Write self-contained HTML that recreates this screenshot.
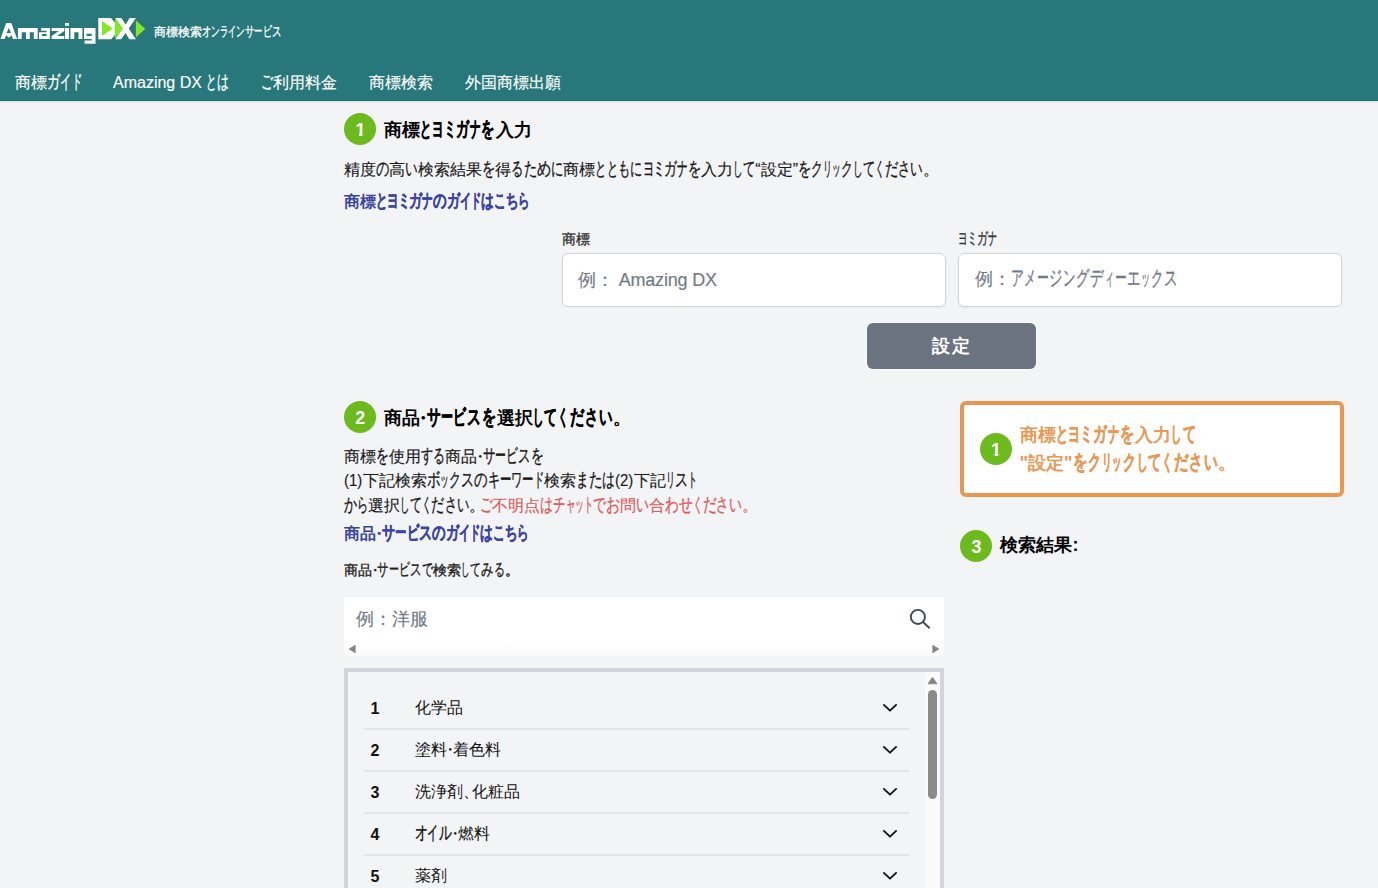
<!DOCTYPE html>
<html lang="ja">
<head>
<meta charset="utf-8">
<title>Amazing DX 商標検索オンラインサービス</title>
<style>
*{box-sizing:border-box;margin:0;padding:0}
html,body{width:1378px;height:888px;overflow:hidden}
body{position:relative;background:#f3f4f6;font-family:"Liberation Sans",sans-serif;color:#1a1a1a}
.abs{position:absolute}
.t{position:absolute;white-space:nowrap}
.t{--f:1}
.t i{font-style:normal;display:inline-block;line-height:0;-webkit-text-stroke:.35px;font-size:1.18em;transform-origin:0 50%;transform:scaleX(calc(var(--w)*var(--f)/1.18));margin-right:calc((var(--w)*var(--f)/1.18 - 1)*1em)}
.t b{font-weight:inherit;display:inline-block;line-height:0}
.t b.pl{margin-right:calc((var(--w)*var(--f) - 1)*1em)}
.t b.pm{margin:0 calc((var(--w)*var(--f) - 1)*.5em)}
.sm{display:inline-block;line-height:0;transform:scaleX(.93);transform-origin:0 50%;margin-right:-1px}
.w40{--w:0.40}.w45{--w:0.45}.w50{--w:0.50}.w55{--w:0.55}.w57{--w:0.57}.w58{--w:0.58}.w60{--w:0.60}.w62{--w:0.62}.w64{--w:0.64}.w65{--w:0.65}.w68{--w:0.68}.w70{--w:0.70}.w72{--w:0.72}.w75{--w:0.75}.w76{--w:0.76}.w78{--w:0.78}.w80{--w:0.80}.w82{--w:0.82}.w85{--w:0.85}.w88{--w:0.88}.w90{--w:0.90}
header{position:absolute;left:0;top:0;width:1378px;height:103px;background:linear-gradient(to bottom,#28777a 0,#28777a 100px,#2e6a6c 100px,#2e6a6c 101px,#cdeaec 101px,#cdeaec 102px,#e6ecef 102px,#e6ecef 103px)}
.logo{position:absolute;left:0;top:0}
.num{position:absolute;width:32px;height:32px;border-radius:50%;background:#6dba1e;color:#fff;font-weight:700;font-size:18px;line-height:34px;text-align:center}
.num span{display:inline-block;position:relative;left:.5px}
.num .one{clip-path:polygon(0 0,100% 0,100% 61%,70% 61%,70% 100%,36% 100%,36% 61%,0 61%)}
.inp{position:absolute;height:54px;width:384px;background:#fff;border:1px solid #d1d5db;border-radius:6px;box-shadow:0 1px 2px rgba(0,0,0,.05)}
.btn{position:absolute;left:867px;top:323px;width:169px;height:46px;border-radius:6px;background:#6b7280;box-shadow:0 0 0 1px #f9fafc}
.search{position:absolute;left:344px;top:597px;width:600px;height:59px;background:#fff}
.search .sb{position:absolute;left:0;top:43px;width:600px;height:16px;background:linear-gradient(#fff,#fafafa)}
.list{position:absolute;left:344px;top:668px;width:600px;height:240px;border:4px solid #d1d5db;background:#f3f4f6}
.track{position:absolute;left:925px;top:672px;width:15px;height:216px;background:#fafafa}
.thumb{position:absolute;left:928px;top:690px;width:9px;height:109px;border-radius:5px;background:#8b8b8b}
.sep{position:absolute;left:364px;width:545px;height:2px;background:#e3e5ea}
.chev{position:absolute;left:881px;width:18px;height:12px}
.obox{position:absolute;left:960px;top:401px;width:384px;height:96px;border:4px solid #eb9650;border-radius:6px;background:#fff}
</style>
</head>
<body>
<header>
<svg class="logo" width="150" height="50" viewBox="0 0 150 50" aria-label="Amazing DX">
<g fill="#fff" fill-rule="evenodd">
<path d="M0.4,38.9 L6.2,22.9 H11.3 L17.2,38.9 H12.9 L11.6,35.2 L8.9,37.8 L6.1,35.2 L4.7,38.9 Z M8.8,28 L11,32.9 H6.6 Z"/>
<path d="M17.9,28 H37.7 V38.9 H33.8 V32.2 H29.8 V38.9 H26 V32.2 H21.7 V38.9 H17.9 Z"/>
<path d="M41.1,28 H49.9 V38.9 H39 V32.2 H46.6 V30.8 H41.1 Z M42,33.9 H46.6 V36 H42 Z"/>
<path d="M51.6,28 H64.3 V31 L57.2,36 H64.3 V38.9 H51.6 V36 L58.8,31 H51.6 Z"/>
<path d="M65,22.9 H69 V25.7 H65 Z M65,28 H69 V38.9 H65 Z"/>
<path d="M70.4,28 H82.4 V38.9 H78.5 V32.2 H74.3 V38.9 H70.4 Z"/>
<path d="M84,28 H95.5 V43.8 H84.6 V40.4 H91.7 V38.9 H84 Z M86.6,33.8 H91.7 V36 H86.6 Z"/>
<path d="M98.3,18.1 H110.9 L114.9,22.5 V35 L111.2,39.2 H98.3 Z"/>
<path d="M115.2,18.1 H121.4 L125.6,24.6 L129.6,18.1 H135.9 L128.8,28.6 L135.9,39.2 H129.3 L125.6,33 L121.2,39.2 H115.2 L122.4,28.6 Z"/>
</g>
<g fill="#85e825">
<path d="M102,21.1 L112.6,28.5 L102,36 Z"/>
<path d="M115,18.4 L123,28.6 L115,38.7 Z"/>
<path d="M135.9,20.5 L145.3,28.8 L135.9,37.5 Z"/>
</g>
</svg>
</header>

<div class="num" style="left:344px;top:113px"><span class="one">1</span></div>
<div class="inp" style="left:562px;top:253px"></div>
<div class="inp" style="left:958px;top:253px"></div>
<div class="btn"></div>

<div class="num" style="left:343.7px;top:401.4px"><span>2</span></div>

<div class="search"><div class="sb"></div>
<svg class="abs" style="left:564px;top:10px" width="24" height="24" viewBox="0 0 24 24" fill="none" stroke="#414957" stroke-width="1.9" stroke-linecap="round"><circle cx="9.9" cy="9.9" r="7.05"/><path d="M15,15 L21.2,20.7"/></svg>
<svg class="abs" style="left:4px;top:46.5px" width="9" height="10" viewBox="0 0 9 10"><path d="M1.2,5 L7.2,1.3 V8.7 Z" fill="#858585" stroke="#858585" stroke-width=".8" stroke-linejoin="round"/></svg>
<svg class="abs" style="left:587px;top:46.5px" width="9" height="10" viewBox="0 0 9 10"><path d="M7.8,5 L1.8,1.3 V8.7 Z" fill="#858585" stroke="#858585" stroke-width=".8" stroke-linejoin="round"/></svg>
</div>

<div class="list"></div>
<div class="track"></div>
<svg class="abs" style="left:927px;top:676px" width="11" height="9" viewBox="0 0 11 9"><path d="M5.5,1.2 L10,7.8 H1 Z" fill="#858585" stroke="#858585" stroke-width=".8" stroke-linejoin="round"/></svg>
<div class="thumb"></div>
<div class="sep" style="top:728px"></div>
<svg class="chev" style="top:702px" viewBox="0 0 18 12" fill="none" stroke="#111" stroke-width="1.85" stroke-linecap="round" stroke-linejoin="round"><path d="M2.9,2.9 L9,8.7 L15.1,2.9"/></svg>
<div class="sep" style="top:770px"></div>
<svg class="chev" style="top:744px" viewBox="0 0 18 12" fill="none" stroke="#111" stroke-width="1.85" stroke-linecap="round" stroke-linejoin="round"><path d="M2.9,2.9 L9,8.7 L15.1,2.9"/></svg>
<div class="sep" style="top:812px"></div>
<svg class="chev" style="top:786px" viewBox="0 0 18 12" fill="none" stroke="#111" stroke-width="1.85" stroke-linecap="round" stroke-linejoin="round"><path d="M2.9,2.9 L9,8.7 L15.1,2.9"/></svg>
<div class="sep" style="top:854px"></div>
<svg class="chev" style="top:828px" viewBox="0 0 18 12" fill="none" stroke="#111" stroke-width="1.85" stroke-linecap="round" stroke-linejoin="round"><path d="M2.9,2.9 L9,8.7 L15.1,2.9"/></svg>
<div class="sep" style="top:896px"></div>
<svg class="chev" style="top:870px" viewBox="0 0 18 12" fill="none" stroke="#111" stroke-width="1.85" stroke-linecap="round" stroke-linejoin="round"><path d="M2.9,2.9 L9,8.7 L15.1,2.9"/></svg>

<div class="obox"></div>
<div class="num" style="left:979.6px;top:433.4px"><span class="one">1</span></div>
<div class="num" style="left:959.9px;top:529.8px"><span>3</span></div>

<div class="t" id="tag" style="left:154px;top:23px;font-size:12px;line-height:18px;color:#fff;-webkit-text-stroke:.3px;--f:0.976;">商標検索<i class="w80">オ</i><i class="w75">ン</i><i class="w72">ラ</i><i class="w70">イ</i><i class="w75">ン</i><i class="w82">サ</i><i class="w72">ー</i><i class="w78">ビ</i><i class="w82">ス</i></div>
<div class="t" id="n1" style="left:15px;top:71px;font-size:16px;line-height:24px;color:#fff;-webkit-text-stroke:.15px;--f:1.001;">商標<i class="w82">ガ</i><i class="w70">イ</i><i class="w64">ド</i></div>
<div class="t" id="n2" style="left:113px;top:71px;font-size:16px;line-height:24px;color:#fff;-webkit-text-stroke:.15px;--f:0.920;">Amazing DX <i class="w72">と</i><i class="w80">は</i></div>
<div class="t" id="n3" style="left:261px;top:71px;font-size:16px;line-height:24px;color:#fff;-webkit-text-stroke:.15px;--f:0.951;"><i class="w78">ご</i>利用料金</div>
<div class="t" id="n4" style="left:369px;top:71px;font-size:16px;line-height:24px;color:#fff;-webkit-text-stroke:.15px;">商標検索</div>
<div class="t" id="n5" style="left:465px;top:71px;font-size:16px;line-height:24px;color:#fff;-webkit-text-stroke:.15px;">外国商標出願</div>
<div class="t" id="h1" style="left:384px;top:117px;font-size:18px;line-height:27px;color:#000;font-weight:700;--f:0.888;">商標<i class="w72">と</i><i class="w72">ヨ</i><i class="w65">ミ</i><i class="w82">ガ</i><i class="w68">ナ</i><i class="w85">を</i>入力</div>
<div class="t" id="d1" style="left:344px;top:158px;font-size:16px;line-height:24px;color:#1a1a1a;-webkit-text-stroke:.15px;--f:0.974;">精度<i class="w85">の</i>高<i class="w80">い</i>検索結果<i class="w85">を</i>得<i class="w78">る</i><i class="w85">た</i><i class="w90">め</i><i class="w78">に</i>商標<i class="w72">と</i><i class="w72">と</i><i class="w78">も</i><i class="w78">に</i><i class="w72">ヨ</i><i class="w65">ミ</i><i class="w82">ガ</i><i class="w68">ナ</i><i class="w85">を</i>入力<i class="w62">し</i><i class="w78">て</i>“設定”<i class="w85">を</i><i class="w75">ク</i><i class="w57">リ</i><i class="w55">ッ</i><i class="w75">ク</i><i class="w62">し</i><i class="w78">て</i><i class="w62">く</i><i class="w85">だ</i><i class="w78">さ</i><i class="w80">い</i><b class="pl w50">。</b></div>
<div class="t" id="a1" style="left:344px;top:190px;font-size:16px;line-height:24px;color:#3b46a2;font-weight:700;--f:0.985;">商標<i class="w72">と</i><i class="w72">ヨ</i><i class="w65">ミ</i><i class="w82">ガ</i><i class="w68">ナ</i><i class="w85">の</i><i class="w82">ガ</i><i class="w70">イ</i><i class="w64">ド</i><i class="w80">は</i><i class="w75">こ</i><i class="w78">ち</i><i class="w72">ら</i></div>
<div class="t" id="l1" style="left:562px;top:229px;font-size:14px;line-height:21px;color:#333;-webkit-text-stroke:.35px;">商標</div>
<div class="t" id="l2" style="left:958px;top:229px;font-size:14px;line-height:21px;color:#333;-webkit-text-stroke:.35px;--f:0.922;"><i class="w72">ヨ</i><i class="w65">ミ</i><i class="w82">ガ</i><i class="w68">ナ</i></div>
<div class="t" id="p1" style="left:578.3px;top:267px;font-size:18px;line-height:27px;color:#737a87;-webkit-text-stroke:.15px;letter-spacing:-.2px;">例： Amazing DX</div>
<div class="t" id="p2" style="left:974.5px;top:266px;font-size:18px;line-height:27px;color:#737a87;-webkit-text-stroke:.15px;--f:0.927;">例：<i class="w78">ア</i><i class="w72">メ</i><i class="w72">ー</i><i class="w80">ジ</i><i class="w75">ン</i><i class="w80">グ</i><i class="w82">デ</i><i class="w55">ィ</i><i class="w72">ー</i><i class="w80">エ</i><i class="w55">ッ</i><i class="w75">ク</i><i class="w82">ス</i></div>
<div class="t" id="bt" style="left:932px;top:333px;font-size:18px;line-height:27px;color:#fff;font-weight:700;letter-spacing:2px;">設定</div>
<div class="t" id="h2" style="left:384px;top:405px;font-size:18px;line-height:27px;color:#000;font-weight:700;--f:0.940;">商品<b class="pm w40">・</b><i class="w82">サ</i><i class="w72">ー</i><i class="w78">ビ</i><i class="w82">ス</i><i class="w85">を</i>選択<i class="w62">し</i><i class="w78">て</i><i class="w62">く</i><i class="w85">だ</i><i class="w78">さ</i><i class="w80">い</i><b class="pl w50">。</b></div>
<div class="t" id="d2a" style="left:344px;top:445px;font-size:16px;line-height:24px;color:#1a1a1a;-webkit-text-stroke:.15px;--f:0.939;">商標<i class="w85">を</i>使用<i class="w80">す</i><i class="w78">る</i>商品<b class="pm w40">・</b><i class="w82">サ</i><i class="w72">ー</i><i class="w78">ビ</i><i class="w82">ス</i><i class="w85">を</i></div>
<div class="t" id="d2b" style="left:344px;top:469px;font-size:16px;line-height:24px;color:#1a1a1a;-webkit-text-stroke:.15px;--f:0.987;"><span class="sm">(1)</span>下記検索<i class="w85">ボ</i><i class="w55">ッ</i><i class="w75">ク</i><i class="w82">ス</i><i class="w85">の</i><i class="w76">キ</i><i class="w72">ー</i><i class="w70">ワ</i><i class="w72">ー</i><i class="w64">ド</i>検索<i class="w80">ま</i><i class="w85">た</i><i class="w80">は</i><span class="sm">(2)</span>下記<i class="w57">リ</i><i class="w82">ス</i><i class="w58">ト</i></div>
<div class="t" id="d2c" style="left:344px;top:494px;font-size:16px;line-height:24px;color:#1a1a1a;-webkit-text-stroke:.15px;--f:0.954;"><i class="w85">か</i><i class="w72">ら</i>選択<i class="w62">し</i><i class="w78">て</i><i class="w62">く</i><i class="w85">だ</i><i class="w78">さ</i><i class="w80">い</i><b class="pl w50">。</b></div>
<div class="t" id="d2d" style="left:479.5px;top:494px;font-size:16px;line-height:24px;color:#d95c5c;-webkit-text-stroke:.15px;--f:0.996;"><i class="w78">ご</i>不明点<i class="w80">は</i><i class="w78">チ</i><i class="w60">ャ</i><i class="w55">ッ</i><i class="w58">ト</i><i class="w80">で</i><i class="w88">お</i>問<i class="w80">い</i>合<i class="w85">わ</i><i class="w85">せ</i><i class="w62">く</i><i class="w85">だ</i><i class="w78">さ</i><i class="w80">い</i><b class="pl w50">。</b></div>
<div class="t" id="a2" style="left:344px;top:522px;font-size:16px;line-height:24px;color:#3b46a2;font-weight:700;--f:0.985;">商品<b class="pm w40">・</b><i class="w82">サ</i><i class="w72">ー</i><i class="w78">ビ</i><i class="w82">ス</i><i class="w85">の</i><i class="w82">ガ</i><i class="w70">イ</i><i class="w64">ド</i><i class="w80">は</i><i class="w75">こ</i><i class="w78">ち</i><i class="w72">ら</i></div>
<div class="t" id="s2" style="left:344px;top:560px;font-size:14px;line-height:21px;color:#222;-webkit-text-stroke:.35px;--f:0.968;">商品<b class="pm w40">・</b><i class="w82">サ</i><i class="w72">ー</i><i class="w78">ビ</i><i class="w82">ス</i><i class="w80">で</i>検索<i class="w62">し</i><i class="w78">て</i><i class="w88">み</i><i class="w78">る</i><b class="pl w50">。</b></div>
<div class="t" id="ps" style="left:355.9px;top:606px;font-size:18px;line-height:27px;color:#737a87;-webkit-text-stroke:.15px;">例：洋服</div>
<div class="t" id="o1" style="left:1019.5px;top:422px;font-size:18px;line-height:27px;color:#e89955;font-weight:700;--f:0.943;">商標<i class="w72">と</i><i class="w72">ヨ</i><i class="w65">ミ</i><i class="w82">ガ</i><i class="w68">ナ</i><i class="w85">を</i>入力<i class="w62">し</i><i class="w78">て</i></div>
<div class="t" id="o2" style="left:1019.5px;top:450px;font-size:18px;line-height:27px;color:#e89955;font-weight:700;--f:0.963;">"設定"<i class="w85">を</i><i class="w75">ク</i><i class="w57">リ</i><i class="w55">ッ</i><i class="w75">ク</i><i class="w62">し</i><i class="w78">て</i><i class="w62">く</i><i class="w85">だ</i><i class="w78">さ</i><i class="w80">い</i><b class="pl w50">。</b></div>
<div class="t" id="h3" style="left:1000.4px;top:532px;font-size:18px;line-height:27px;color:#000;font-weight:700;">検索結果:</div>
<div class="t" id="rn0" style="left:370.5px;top:697px;font-size:16px;line-height:24px;color:#111;font-weight:700;">1</div>
<div class="t" id="rt0" style="left:414.5px;top:696px;font-size:16px;line-height:24px;color:#111;">化学品</div>
<div class="t" id="rn1" style="left:370.5px;top:739px;font-size:16px;line-height:24px;color:#111;font-weight:700;">2</div>
<div class="t" id="rt1" style="left:414.5px;top:738px;font-size:16px;line-height:24px;color:#111;--f:1.015;">塗料<b class="pm w40">・</b>着色料</div>
<div class="t" id="rn2" style="left:370.5px;top:781px;font-size:16px;line-height:24px;color:#111;font-weight:700;">3</div>
<div class="t" id="rt2" style="left:414.5px;top:780px;font-size:16px;line-height:24px;color:#111;--f:1.263;">洗浄剤<b class="pl w45">、</b>化粧品</div>
<div class="t" id="rn3" style="left:370.5px;top:823px;font-size:16px;line-height:24px;color:#111;font-weight:700;">4</div>
<div class="t" id="rt3" style="left:414.5px;top:822px;font-size:16px;line-height:24px;color:#111;--f:0.998;"><i class="w80">オ</i><i class="w70">イ</i><i class="w80">ル</i><b class="pm w40">・</b>燃料</div>
<div class="t" id="rn4" style="left:370.5px;top:865px;font-size:16px;line-height:24px;color:#111;font-weight:700;">5</div>
<div class="t" id="rt4" style="left:414.5px;top:864px;font-size:16px;line-height:24px;color:#111;">薬剤</div>
</body>
</html>
